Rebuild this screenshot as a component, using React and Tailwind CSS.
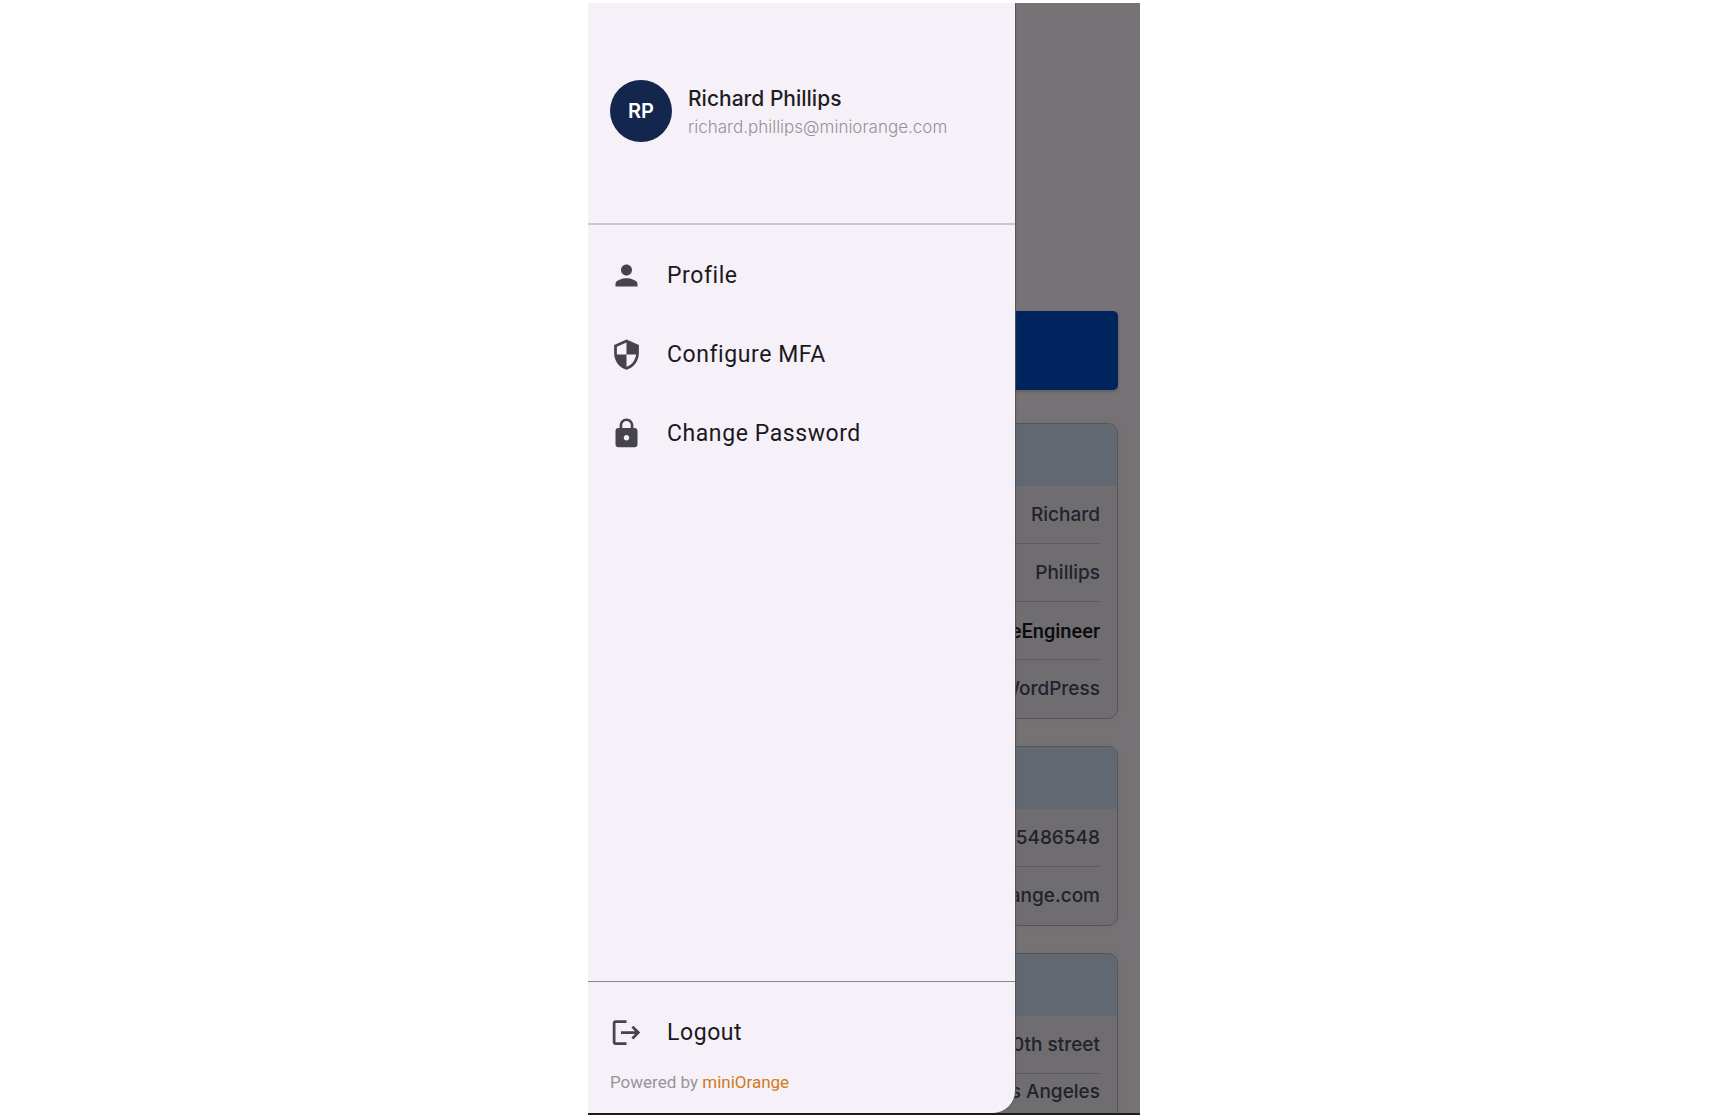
import React from "react";
import { MdLock, MdLogout, MdPerson, MdSecurity } from "react-icons/md";

const MENU = [
  { label: "Profile", icon: MdPerson },
  { label: "Configure MFA", icon: MdSecurity },
  { label: "Change Password", icon: MdLock },
];

const PERSONAL = [
  { value: "Richard" },
  { value: "Phillips" },
  { value: "eEngineer", strong: true },
  { value: "WordPress" },
];

const CONTACT = [{ value: "45486548" }, { value: "ange.com" }];

const ADDRESS = [{ value: "0th street" }, { value: "s Angeles", compact: true }];

function DrawerItem({ icon: Icon, label }) {
  return (
    <button
      type="button"
      className="flex h-[79px] w-full items-center gap-6 px-[22px] text-left"
    >
      <Icon className="size-[33px] shrink-0 text-[#46444b]" />
      <span className="text-[23px] leading-7 tracking-wide text-[#1a1920]">{label}</span>
    </button>
  );
}

function InfoCard({ rows, open = false }) {
  return (
    <section
      className={`overflow-hidden border border-[#565459] bg-[#6f6d70] shadow-[0_0_12px_#6f6f70] ${
        open ? "flex-1 rounded-t-[10px] border-b-0" : "rounded-[10px]"
      }`}
    >
      <div className="h-[62px] bg-[#616872]" />
      <ul className="px-[17px]">
        {rows.map((row) => (
          <li
            key={row.value}
            className={`flex items-center justify-end border-b border-[#5e5c60] leading-6 font-medium last:border-b-0 ${
              row.compact ? "h-9" : "h-[58px]"
            } ${
              row.strong
                ? "font-[Roboto,sans-serif] text-[20px] text-[#0b0a0c]"
                : "text-[19px] text-[#22222c]"
            }`}
          >
            {row.value}
          </li>
        ))}
      </ul>
    </section>
  );
}

function Drawer() {
  return (
    <aside className="absolute inset-y-0 left-0 flex w-[427px] flex-col rounded-br-[22px] bg-[#f6f1f9] font-[Roboto,sans-serif] shadow-[1px_0_1px_#545156]">
      <header className="flex h-[222px] items-center gap-4 border-b-2 border-[#cbc6ce] px-[22px] pb-1">
        <div className="flex size-[62px] shrink-0 items-center justify-center rounded-full bg-[#14264d] font-[Inter,sans-serif] text-[20px] font-semibold text-white">
          RP
        </div>
        <div className="pt-1 font-[Inter,sans-serif]">
          <h1 className="text-[21px] leading-7 font-medium text-[#1e1d22]">Richard Phillips</h1>
          <p className="text-[17px] leading-7 font-light text-[#949198]">
            richard.phillips@miniorange.com
          </p>
        </div>
      </header>

      <nav className="flex-1 pt-[11px]">
        {MENU.map((item) => (
          <DrawerItem key={item.label} {...item} />
        ))}
      </nav>

      <footer className="border-t border-[#88858c] pt-[11px] pb-[21px]">
        <DrawerItem icon={MdLogout} label="Logout" />
        <p className="px-[22px] text-[17px] leading-5 text-[#96939a]">
          Powered by{" "}
          <a href="#miniorange" className="text-[#d07a1c]">
            miniOrange
          </a>
        </p>
      </footer>
    </aside>
  );
}

export default function App() {
  return (
    <div className="flex min-h-screen justify-center bg-white py-[3px] font-[Inter,sans-serif]">
      <main className="relative flex w-full max-w-[552px] flex-col overflow-hidden border-b-2 border-[#1d1c1f] bg-[#767275]">
        <div className="flex flex-1 flex-col gap-[27px] px-[22px] pt-[308px]">
          <div className="mb-1.5 h-[79px] rounded-[5px] bg-[#00255e] shadow-[0_2px_3px_#636064]" />
          <InfoCard rows={PERSONAL} />
          <InfoCard rows={CONTACT} />
          <InfoCard rows={ADDRESS} open />
        </div>
        <Drawer />
      </main>
    </div>
  );
}
